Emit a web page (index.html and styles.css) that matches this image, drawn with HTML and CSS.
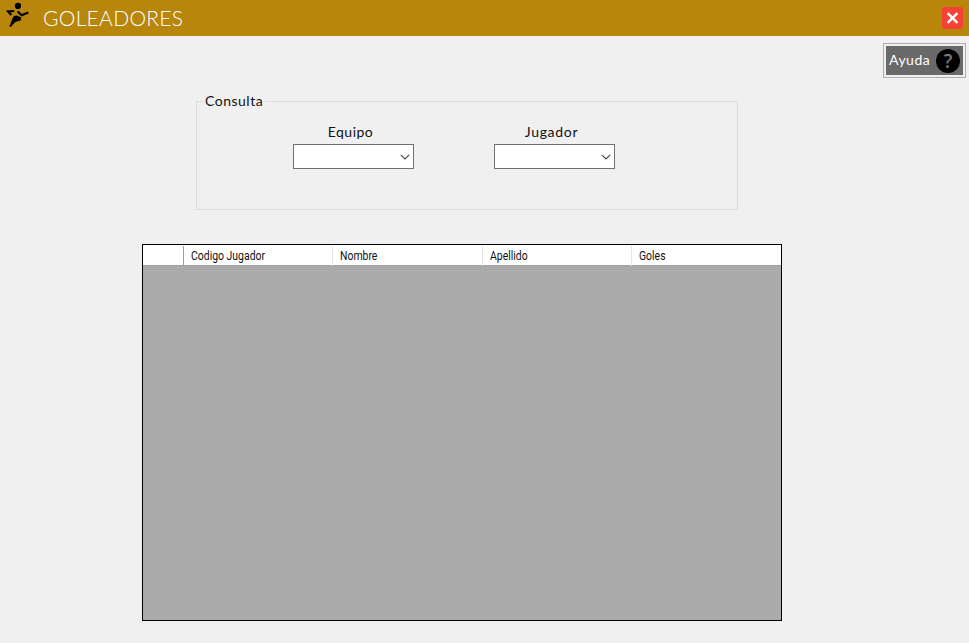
FILE: index.html
```html
<!DOCTYPE html>
<html lang="es">
<head>
<meta charset="utf-8">
<title>Goleadores</title>
<link rel="stylesheet" href="styles.css">
</head>
<body>
<header class="titlebar">
  <svg class="runner" viewBox="0 0 24 26" aria-hidden="true">
    <circle cx="12" cy="3.9" r="3.1"/>
    <path class="limb" d="M5.4 13 2.2 9.5 8.2 9M11.6 9.4 15.6 13.2 22.3 10.4"/>
    <path d="M7.8 14 11 13.6 15.3 15.6 14.6 18.4 9.3 20 4.8 24.9 3.4 24.2 6.6 16.2Z"/>
  </svg>
  <h1 class="title">GOLEADORES</h1>
  <button class="close" aria-label="Cerrar">
    <svg viewBox="0 0 21 22"><path d="M5.6 6.1 15.4 15.9M15.4 6.1 5.6 15.9"/></svg>
  </button>
</header>
<main class="content">
  <button class="help">
    <span class="help-label">Ayuda</span>
    <span class="help-icon">?</span>
  </button>
  <fieldset class="query">
    <legend><span class="legend-text">Consulta</span></legend>
    <div class="field">
      <span class="label equipo">Equipo</span>
      <div class="combo"><svg viewBox="0 0 10 6"><path d="M.8.8 5 5 9.2.8"/></svg></div>
    </div>
    <div class="field">
      <span class="label jugador">Jugador</span>
      <div class="combo"><svg viewBox="0 0 10 6"><path d="M.8.8 5 5 9.2.8"/></svg></div>
    </div>
  </fieldset>
  <section class="grid">
    <div class="grid-head">
      <div class="cell"></div>
      <div class="cell"><span>Codigo Jugador</span></div>
      <div class="cell"><span>Nombre</span></div>
      <div class="cell"><span>Apellido</span></div>
      <div class="cell"><span>Goles</span></div>
    </div>
  </section>
</main>
</body>
</html>
```
FILE: styles.css
```css
* { box-sizing: border-box; }
body {
  margin: 0;
  height: 643px;
  overflow: hidden;
  background: #f0f0f0;
  color: #111;
  font-family: Lato, sans-serif;
}
button { padding: 0; border: 0; font: inherit; }
svg { display: block; }
.titlebar {
  display: flex;
  height: 36px;
  padding: 0 6px 0 6px;
  background: #b8860b;
}
.runner { width: 24px; height: 26px; margin-top: 2px; }
.limb { fill: none; stroke: #000; stroke-width: 2.2; }
.title {
  margin: 4px 0 0 13px;
  color: #fff;
  font-size: 21px;
  font-weight: 300;
  line-height: 28px;
  letter-spacing: .3px;
}
.close {
  width: 21px;
  height: 22px;
  margin: 7px 0 0 auto;
  border-radius: 3px;
  background: #f44336;
}
.close path { fill: none; stroke: #fff; stroke-width: 2.4; }
.content { display: flex; flex-direction: column; }
.help {
  display: flex;
  align-items: center;
  align-self: flex-end;
  width: 83px;
  height: 35px;
  margin: 7px 3px 0 0;
  padding-left: 3px;
  border: 1px solid #adadad;
  background: #696969;
  box-shadow: inset 0 0 0 2px #f0f0f0;
  color: #fff;
}
.help-label { width: 49px; padding: 0 0 2px 2px; text-align: left; font-size: 14px; letter-spacing: .5px; }
.help-icon {
  width: 24px;
  height: 24px;
  border-radius: 50%;
  background: #000;
  color: #777;
  font: 600 19px/24px "Open Sans", sans-serif;
  text-align: center;
}
.query {
  display: flex;
  gap: 80px;
  width: 542px;
  height: 118px;
  margin: 14px 0 0 196px;
  padding: 13px 0 0 96px;
  border: 1px solid #dcdcdc;
}
.query legend { height: 18px; margin-left: -90px; padding: 0 2px; font-size: 14px; line-height: 18px; }
.legend-text { letter-spacing: .5px; }
.field { width: 121px; text-align: center; }
.label { display: block; height: 21px; font-size: 14px; line-height: 18px; }
.equipo { padding-right: 6px; letter-spacing: .5px; }
.jugador { padding-right: 6px; letter-spacing: .7px; }
.combo {
  display: flex;
  align-items: center;
  justify-content: flex-end;
  height: 25px;
  padding-right: 3px;
  border: 1px solid #707070;
  background: #fff;
}
.combo svg { width: 10px; height: 6px; }
.combo path { fill: none; stroke: #444; stroke-width: 1.1; }
.grid {
  width: 640px;
  height: 377px;
  margin: 34px 0 0 142px;
  border: 1px solid #000;
  background: #ababab;
}
.grid-head {
  display: grid;
  grid-template-columns: 41px 149px 150px 149px 149px;
  height: 21px;
  padding-top: 1px;
  border-bottom: 1px solid #a0a0a0;
  background: #fff;
}
.cell {
  padding-left: 6.6px;
  border-right: 1px solid #e0e6ea;
  font: 12px/20px Roboto, sans-serif;
  white-space: nowrap;
}
.cell:first-child { border-right-color: #a0a0a0; }
.cell:last-child { border-right: 0; }
.cell span { display: inline-block; transform: scaleX(.87); transform-origin: left; }
```
